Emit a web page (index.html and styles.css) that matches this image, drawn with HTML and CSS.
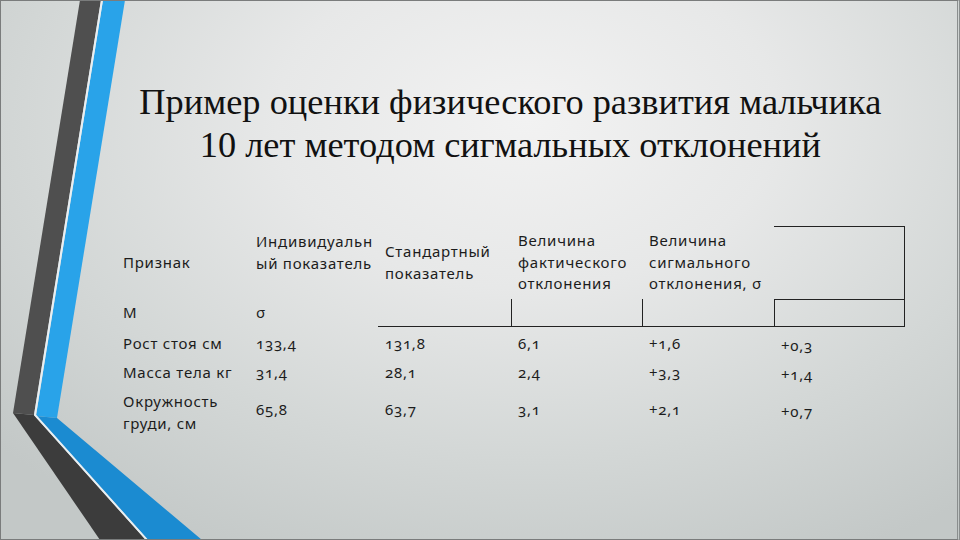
FILE: index.html
```html
<!DOCTYPE html>
<html lang="ru">
<head>
<meta charset="utf-8">
<title>Сигмальные отклонения</title>
<link rel="stylesheet" href="styles.css">
</head>
<body>
<div class="slide">
  <svg class="deco" width="220" height="540" viewBox="0 0 220 540" aria-hidden="true">
    <polygon points="80,0 101,0 34,415 13,413" fill="#4f4f4f"/>
    <polygon points="13,413 34,415 146,540 100,540" fill="#3c3c3c"/>
    <polygon points="103,0 125,0 57,418 36,416" fill="#29a3e9"/>
    <polygon points="36,416 57,418 202,540 148,540" fill="#1b8bd1"/>
    <polyline points="102,0 35,415 147,540" fill="none" stroke="#e9eff2" stroke-width="2"/>
  </svg>
  <div class="content">
    <h1 class="title"><span class="title-text">Пример оценки физического развития мальчика<br>10 лет методом сигмальных отклонений</span></h1>
    <div class="table">
      <div class="cell head mid">Признак</div>
      <div class="cell head top">Индивидуальн<br>ый показатель</div>
      <div class="cell head mid">Стандартный<br>показатель</div>
      <div class="cell head mid">Величина<br>фактического<br>отклонения</div>
      <div class="cell head mid">Величина<br>сигмального<br>отклонения, σ</div>
      <div class="cell head box-top"></div>

      <div class="cell sub">М</div>
      <div class="cell sub">σ</div>
      <div class="cell sub line-b"></div>
      <div class="cell sub line-b line-l"></div>
      <div class="cell sub line-b line-l"></div>
      <div class="cell sub box-bot"></div>

      <div class="cell row">Рост стоя см</div>
      <div class="cell row num">133,4</div>
      <div class="cell row num">131,8</div>
      <div class="cell row num">6,1</div>
      <div class="cell row num">+1,6</div>
      <div class="cell row num last">+0,3</div>

      <div class="cell row">Масса тела кг</div>
      <div class="cell row num">31,4</div>
      <div class="cell row num">28,1</div>
      <div class="cell row num">2,4</div>
      <div class="cell row num">+3,3</div>
      <div class="cell row num last">+1,4</div>

      <div class="cell row">Окружность<br>груди, см</div>
      <div class="cell row num vc">65,8</div>
      <div class="cell row num vc">63,7</div>
      <div class="cell row num vc">3,1</div>
      <div class="cell row num vc">+2,1</div>
      <div class="cell row num vc last">+0,7</div>
    </div>
  </div>
</div>
</body>
</html>
```
FILE: styles.css
```css
* { box-sizing: border-box; }
html, body { margin: 0; padding: 0; }
body { width: 960px; height: 540px; overflow: hidden; background: #d8dada; }

.slide {
  position: relative;
  width: 960px;
  height: 540px;
  overflow: hidden;
  border: 1px solid #7a7c7c;
  border-right: 3px double #8a8e8e;
  background: radial-gradient(ellipse 75% 90% at 55% 22%, #f2f2f2 0%, #e7e8e8 35%, #d3d7d6 70%, #c3c8c7 100%);
}

.deco { position: absolute; left: -1px; top: -1px; }

.content {
  padding: 80px 0 0 115px;
  width: 904px;
}

.title {
  margin: 0;
  font-family: "Liberation Serif", "Times New Roman", serif;
  font-weight: normal;
  font-size: 36px;
  line-height: 43px;
  color: #111;
  text-align: center;
  white-space: nowrap;
}
.title-text { display: inline-block; transform: scaleX(1.01); }

.table {
  margin-top: 59px;
  display: grid;
  grid-template-columns: 133px 129px 133px 131px 132px 131px;
  grid-template-rows: 73px 28px 29px 29px auto;
  font-family: "Noto Sans", "Open Sans", sans-serif;
  font-size: 15px;
  line-height: 21.5px;
  letter-spacing: 0.75px;
  color: #1c1c1c;
  font-variant-numeric: oldstyle-nums;
}
.cell { padding-left: 7px; white-space: nowrap; }
.head.mid { align-self: center; }
.head.top { align-self: start; padding-top: 5px; }
.box-top { border-top: 1px solid #222; border-right: 1px solid #222; }
.sub { display: flex; align-items: center; }
.line-b { border-bottom: 1px solid #222; }
.line-l { border-left: 1px solid #222; }
.box-bot { border: 1px solid #222; }
.row { padding-top: 6px; }
.row.vc { align-self: center; padding-top: 0; }
.row.last { padding-top: 8px; }
.row.vc.last { padding-top: 4px; }
```
